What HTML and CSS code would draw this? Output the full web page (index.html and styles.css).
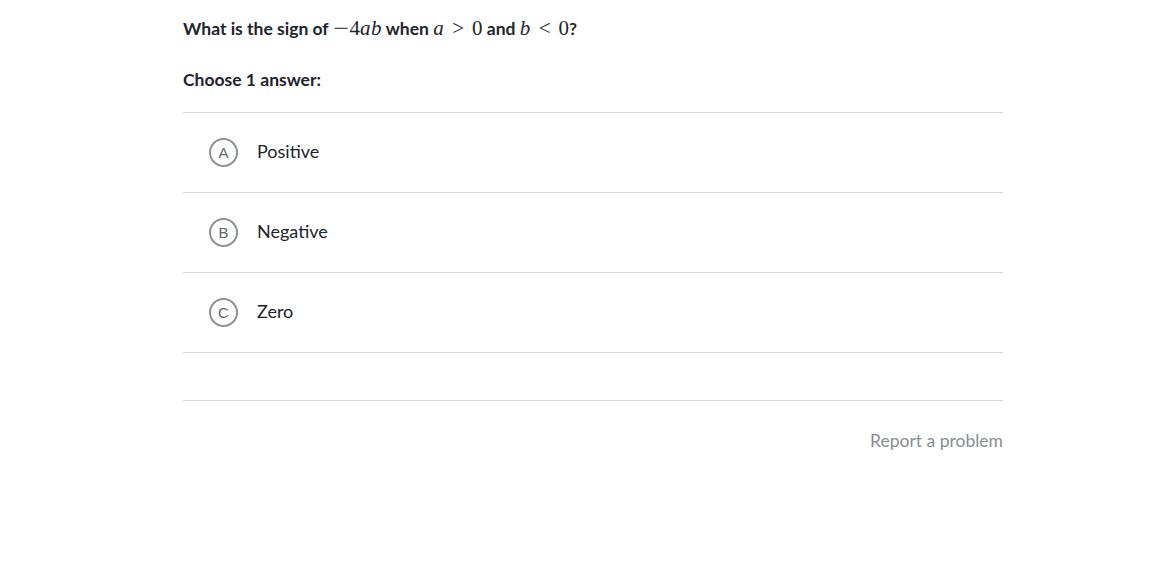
FILE: index.html
```html
<!DOCTYPE html>
<html>
<head>
<meta charset="utf-8">
<link rel="stylesheet" href="styles.css">
</head>
<body>
<div class="page">
  <div class="question">What is the sign of <span class="math"><span class="minus">−</span><span class="up">4</span><i>ab</i></span> when <span class="math"><i>a</i><span class="rel">&gt;</span><span class="up">0</span></span> and <span class="math"><i>b</i><span class="rel">&lt;</span><span class="up">0</span></span>?</div>
  <div class="prompt">Choose 1 answer:</div>
  <ul class="choices">
    <li class="choice"><span class="letter">A</span><span class="label">Positive</span></li>
    <li class="choice"><span class="letter">B</span><span class="label">Negative</span></li>
    <li class="choice"><span class="letter">C</span><span class="label">Zero</span></li>
  </ul>
  <div class="footer"><a class="report">Report a problem</a></div>
</div>
</body>
</html>
```
FILE: styles.css
```css
html, body {
  margin: 0;
  padding: 0;
  background: #fff;
}
body {
  font-family: Lato, "Open Sans", sans-serif;
  color: #21242c;
}
.page {
  width: 820px;
  margin-left: 183px;
  padding-top: 16px;
}
.question {
  font-size: 17.5px;
  font-weight: 700;
  line-height: 24px;
  height: 24px;
}
.math {
  font-family: "Liberation Serif", serif;
  font-weight: 400;
  font-size: 21px;
}
.math i {
  font-style: italic;
  letter-spacing: 0.5px;
}
.math .minus {
  display: inline-block;
  transform: scaleX(1.35);
  margin: 0 3px 0 2px;
}
.math .rel {
  margin: 0 8px;
}
.prompt {
  margin-top: 28px;
  font-size: 17.5px;
  font-weight: 700;
  line-height: 24px;
}
.choices {
  list-style: none;
  margin: 20px 0 0;
  padding: 0;
  border-top: 1px solid #d6d8da;
}
.choice {
  height: 79px;
  border-bottom: 1px solid #d6d8da;
  display: flex;
  align-items: center;
  padding-left: 26px;
}
.letter {
  box-sizing: border-box;
  width: 29px;
  height: 29px;
  border: 2px solid #8f9194;
  border-radius: 50%;
  display: flex;
  align-items: center;
  justify-content: center;
  font-family: "Liberation Sans", Arial, sans-serif;
  font-size: 15px;
  color: #626569;
  margin-right: 19px;
  margin-bottom: 1px;
}
.label {
  font-size: 18px;
  color: #21242c;
  margin-bottom: 4px;
}
.footer {
  margin-top: 47px;
  border-top: 1px solid #d6d8da;
  display: flex;
  justify-content: flex-end;
  padding-top: 29px;
}
.report {
  font-size: 17.5px;
  color: #888d93;
  line-height: 22px;
}
```
